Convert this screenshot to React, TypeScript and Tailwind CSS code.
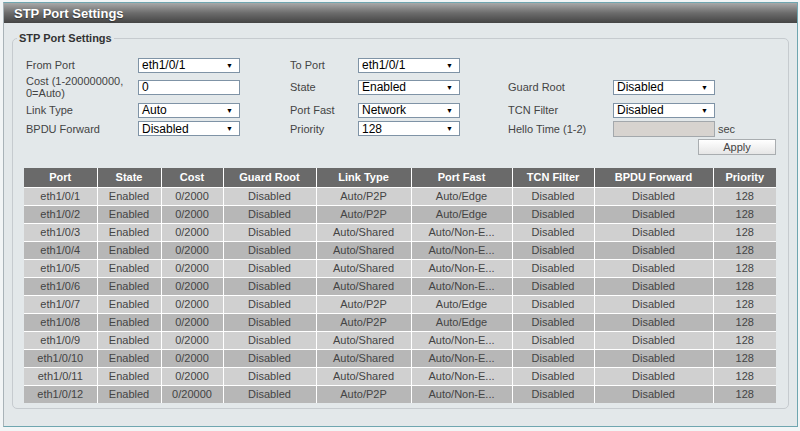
import React from 'react'

const font = { fontFamily: '"Liberation Sans", Arial, sans-serif' }

type Row = {
  port: string
  cost: string
  link: string
  fast: string
}

const rows: Row[] = [
  { port: 'eth1/0/1', cost: '0/2000', link: 'Auto/P2P', fast: 'Auto/Edge' },
  { port: 'eth1/0/2', cost: '0/2000', link: 'Auto/P2P', fast: 'Auto/Edge' },
  { port: 'eth1/0/3', cost: '0/2000', link: 'Auto/Shared', fast: 'Auto/Non-E...' },
  { port: 'eth1/0/4', cost: '0/2000', link: 'Auto/Shared', fast: 'Auto/Non-E...' },
  { port: 'eth1/0/5', cost: '0/2000', link: 'Auto/Shared', fast: 'Auto/Non-E...' },
  { port: 'eth1/0/6', cost: '0/2000', link: 'Auto/Shared', fast: 'Auto/Non-E...' },
  { port: 'eth1/0/7', cost: '0/2000', link: 'Auto/P2P', fast: 'Auto/Edge' },
  { port: 'eth1/0/8', cost: '0/2000', link: 'Auto/P2P', fast: 'Auto/Edge' },
  { port: 'eth1/0/9', cost: '0/2000', link: 'Auto/Shared', fast: 'Auto/Non-E...' },
  { port: 'eth1/0/10', cost: '0/2000', link: 'Auto/Shared', fast: 'Auto/Non-E...' },
  { port: 'eth1/0/11', cost: '0/2000', link: 'Auto/Shared', fast: 'Auto/Non-E...' },
  { port: 'eth1/0/12', cost: '0/20000', link: 'Auto/P2P', fast: 'Auto/Non-E...' },
]

const headers: [string, string][] = [
  ['Port', 'w-[73px]'],
  ['State', 'w-[64px]'],
  ['Cost', 'w-[62px]'],
  ['Guard Root', 'w-[93px]'],
  ['Link Type', 'w-[95px]'],
  ['Port Fast', 'w-[101px]'],
  ['TCN Filter', 'w-[82px]'],
  ['BPDU Forward', 'w-[119px]'],
  ['Priority', 'w-[63px]'],
]

function Select({ value }: { value: string }) {
  return (
    <div className="w-[102px] h-[15px] bg-white border border-[#7f93a6] flex items-center justify-between pl-[3px] pr-[6px] text-[12px] leading-none text-black">
      <span>{value}</span>
      <span className="text-[7px] leading-none">▼</span>
    </div>
  )
}

function Label({ children }: { children: React.ReactNode }) {
  return <span className="text-[11px] leading-[12px] text-[#444]">{children}</span>
}

export default function App() {
  return (
    <div className="w-[800px] h-[431px] bg-[#f2f5f6] pt-[2px] pl-[3px]" style={font}>
      <div className="w-[795px] h-[425px] bg-[#e3e8ea] border-l border-l-[#a9b3b8] border-t border-r border-b border-[#6fa6b0] flex flex-col">
        {/* Title bar */}
        <div className="h-[20px] shrink-0 bg-gradient-to-b from-[#a9a9a9] via-[#6c6c6c] to-[#454545] flex items-center pl-[10px]">
          <h1 className="text-[13px] font-bold text-white leading-none [text-shadow:0_1px_1px_#333]">
            STP Port Settings
          </h1>
        </div>

        <fieldset className="mt-[9px] ml-[8px] w-[777px] border border-[#c6cbcf] rounded-[5px] px-[11px] pb-[5px]">
          <legend className="ml-[-7px] px-[2px] text-[11px] leading-[13px] font-bold text-[#333]">
            STP Port Settings
          </legend>

          {/* Form */}
          <div className="pl-[2px] pt-[11px]">
            <div className="grid grid-cols-[112px_152px_68px_150px_105px_1fr] items-center h-[18px]">
              <Label>From Port</Label>
              <Select value="eth1/0/1" />
              <Label>To Port</Label>
              <Select value="eth1/0/1" />
            </div>
            <div className="grid grid-cols-[112px_152px_68px_150px_105px_1fr] items-center h-[26px]">
              <Label>
                Cost (1-200000000,
                <br />
                0=Auto)
              </Label>
              <div className="w-[102px] h-[15px] bg-white border border-[#7f93a6] flex items-center pl-[3px] text-[12px] leading-none text-black">
                0
              </div>
              <Label>State</Label>
              <Select value="Enabled" />
              <Label>Guard Root</Label>
              <Select value="Disabled" />
            </div>
            <div className="grid grid-cols-[112px_152px_68px_150px_105px_1fr] items-center h-[20px]">
              <Label>Link Type</Label>
              <Select value="Auto" />
              <Label>Port Fast</Label>
              <Select value="Network" />
              <Label>TCN Filter</Label>
              <Select value="Disabled" />
            </div>
            <div className="grid grid-cols-[112px_152px_68px_150px_105px_1fr] items-center h-[17px]">
              <Label>BPDU Forward</Label>
              <Select value="Disabled" />
              <Label>Priority</Label>
              <Select value="128" />
              <Label>Hello Time (1-2)</Label>
              <div className="flex items-center gap-[3px]">
                <div className="w-[102px] h-[16px] bg-[#d7d3cf] border border-[#a3a8ac]" />
                <Label>sec</Label>
              </div>
            </div>
          </div>

          <div className="flex justify-end pr-[1px] mt-[2px]">
            <button className="w-[78px] h-[16px] border border-[#a9adb0] bg-gradient-to-b from-white to-[#e6e6e6] text-[11px] leading-none text-[#444]">
              Apply
            </button>
          </div>

          {/* Port table */}
          <table className="mt-[13px] w-[752px] border-collapse table-fixed text-[11px]">
            <thead>
              <tr className="h-[19px] bg-[#6a6a6a] text-white">
                {headers.map(([h, w]) => (
                  <th key={h} className={`${w} font-bold border-x border-white first:border-l-0 last:border-r-0 p-0 leading-none`}>
                    {h}
                  </th>
                ))}
              </tr>
            </thead>
            <tbody>
              {rows.map((r, i) => (
                <tr
                  key={r.port}
                  className={`h-[18px] text-[#444] text-center ${i % 2 === 0 ? 'bg-[#d0d0d0]' : 'bg-[#b7b7b7]'}`}
                >
                  {[r.port, 'Enabled', r.cost, 'Disabled', r.link, r.fast, 'Disabled', 'Disabled', '128'].map((c, j) => (
                    <td key={j} className="border border-white first:border-l-0 last:border-r-0 border-b-0 p-0 leading-none">
                      {c}
                    </td>
                  ))}
                </tr>
              ))}
            </tbody>
          </table>
        </fieldset>
      </div>
    </div>
  )
}
